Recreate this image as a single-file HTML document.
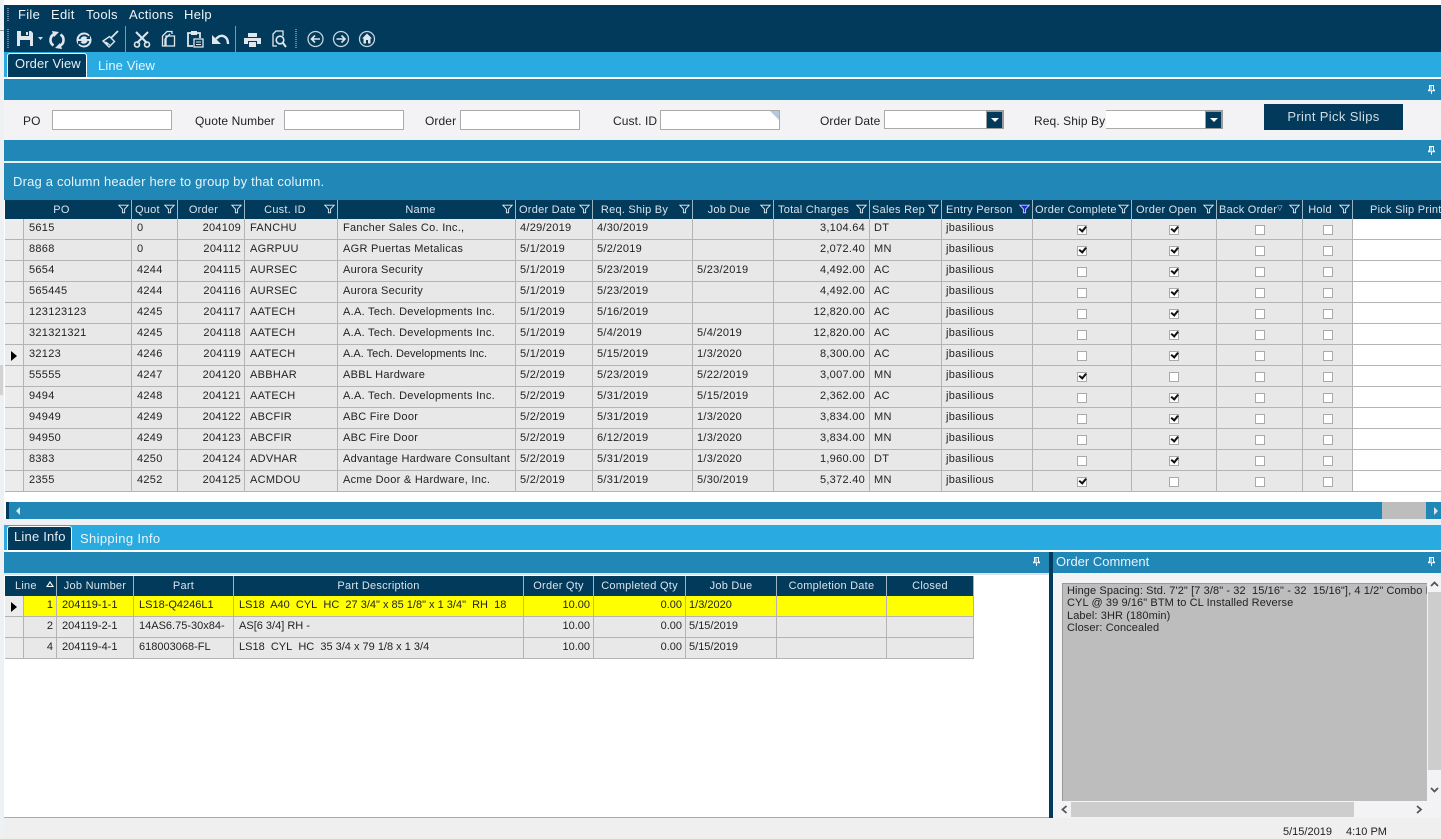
<!DOCTYPE html>
<html><head><meta charset="utf-8"><title>Orders</title>
<style>
html,body{margin:0;padding:0;width:1441px;height:839px;overflow:hidden;background:#fff;font-family:"Liberation Sans",sans-serif;color:#222}
.a{position:absolute}
.t{position:absolute;white-space:nowrap;font-size:12px;letter-spacing:.1px;line-height:14px}
.band{position:absolute;background:#2187b7}
.inp{position:absolute;height:18px;background:#fff;border:1px solid #aaa;top:110px;box-sizing:content-box}
table{border-collapse:separate;border-spacing:0;table-layout:fixed;position:absolute}
th{background:#023a5c;color:#d8e4ec;font-weight:normal;font-size:11px;letter-spacing:.25px;height:18px;padding:0;border-right:1px solid #9fb4c2;text-align:center;position:relative;white-space:nowrap;overflow:hidden;line-height:18px}
td{background:#e8e8e8;height:20px;padding:0 0 0 5px;border-right:1px solid #b4b4b4;border-bottom:1px solid #b4b4b4;font-size:11px;letter-spacing:.28px;line-height:18px;white-space:nowrap;overflow:hidden;vertical-align:top;color:#222;box-sizing:content-box}
td.r{text-align:right;padding:0 3px 0 0}
td.m{text-align:right;padding:0 4px 0 0}
td.d{padding-left:4px}
td.s{background:#ececec;padding:0;position:relative}
td.c{padding:0;text-align:center;position:relative}
td.w{background:#fff;border-right:0}
tr.y td{background:#ff0}
tr.y td.s{background:#ececec}
.lo td{letter-spacing:0}
i.k{position:absolute;left:50%;top:6px;margin-left:-5px;width:8px;height:8px;background:#fff;border:1px solid #aaa;display:block}
i.k.x::after{content:"";position:absolute;left:1px;top:0;width:5px;height:2.5px;border-left:2px solid #111;border-bottom:2px solid #111;transform:rotate(-50deg)}
svg.f{position:absolute;right:2px;top:4px;width:11px;height:10px}
.ar{position:absolute;left:6px;top:6px;width:0;height:0;border-left:6px solid #000;border-top:5px solid transparent;border-bottom:5px solid transparent}
</style></head><body>
<svg width="0" height="0" style="position:absolute"><defs>
<symbol id="fn" viewBox="0 0 12 10"><path d="M.8.8H11.2L7.2 5V9.2H4.8V5Z" fill="none" stroke="#e8f0f5" stroke-width="1"/></symbol>
<symbol id="fb" viewBox="0 0 12 10"><path d="M.8.8H11.2L7.2 5V9.2H4.8V5Z" fill="#2222cc" stroke="#c8d0ff" stroke-width="1"/></symbol>
<symbol id="pin" viewBox="0 0 7 9"><path d="M1.500.5H5.500V5H6.500V5.800H.5V5H1.500ZM3 1V5M3.500 6V9" fill="none" stroke="#fff" stroke-width="1"/></symbol>
</defs></svg>

<!-- left edge -->
<div class="a" style="left:0;top:0;width:4px;height:839px;background:#eef1f4"></div>
<div class="a" style="left:0;top:30px;width:6px;height:1px;background:#9a9a9a"></div>
<div class="a" style="left:0;top:365px;width:3px;height:30px;background:#d2d2d2"></div>

<!-- top navy -->
<div class="a" style="left:4px;top:5px;width:1437px;height:47px;background:#023a5c"></div>
<div class="t" style="left:18px;top:8px;color:#eef3f6;font-size:13px;letter-spacing:.3px">File</div>
<div class="t" style="left:51px;top:8px;color:#eef3f6;font-size:13px;letter-spacing:.3px">Edit</div>
<div class="t" style="left:86px;top:8px;color:#eef3f6;font-size:13px;letter-spacing:.3px">Tools</div>
<div class="t" style="left:129px;top:8px;color:#eef3f6;font-size:13px;letter-spacing:.3px">Actions</div>
<div class="t" style="left:184px;top:8px;color:#eef3f6;font-size:13px;letter-spacing:.3px">Help</div>

<svg class="a" style="left:0;top:0" width="400" height="52" viewBox="0 0 400 52">
 <g stroke="#8fa5b3" stroke-width="1.5" stroke-dasharray="1 1" fill="none">
  <path d="M8 8V22M8 29V48M296 29V48"/></g>
 <path d="M125.500 26V52M235.500 26V52" stroke="#7f97a6"/>
 <!-- save -->
 <path d="M17 31H31L33 33V46H17Z" fill="#dfe7ec"/><path d="M21 31H29V36H21ZM20 40H30V46H20Z" fill="#023a5c"/><path d="M26 32H28V35H26Z" fill="#dfe7ec"/>
 <path d="M38 37H43L40.500 40Z" fill="#d6e0e6"/>
 <!-- refresh -->
 <g fill="none" stroke="#dfe7ec" stroke-width="2.600"><path d="M54.500 34A6.500 6.500 0 0 0 53.500 45.500"/><path d="M59.500 46A6.500 6.500 0 0 0 60.500 34.500"/></g>
 <path d="M52 31L59 32L54 37ZM62 49L55 48L60 43Z" fill="#dfe7ec"/>
 <!-- sync -->
 <circle cx="84" cy="40" r="7.500" fill="#dfe7ec"/><path d="M79.500 39A5 5 0 0 1 88 37M88.500 41A5 5 0 0 1 80 43" fill="none" stroke="#023a5c" stroke-width="1.800"/><path d="M86 39H90V35ZM82 41H78V45Z" fill="#023a5c"/>
 <!-- broom -->
 <path d="M118 31L111 38" stroke="#dfe7ec" stroke-width="1.800"/><path d="M109.500 36.500L114.500 41.500L109 47L103 41Z" fill="none" stroke="#dfe7ec" stroke-width="1.400"/><path d="M106 42L110 45M104.500 41.500L108 45" stroke="#dfe7ec"/>
 <!-- scissors -->
 <path d="M136 32L147 43M148 32L137 43" stroke="#dfe7ec" stroke-width="2"/><circle cx="137" cy="44.500" r="2.500" fill="none" stroke="#dfe7ec" stroke-width="1.600"/><circle cx="147" cy="44.500" r="2.500" fill="none" stroke="#dfe7ec" stroke-width="1.600"/>
 <!-- copy -->
 <path d="M166 46H162.500V36L167 31.500H172V34M166 36H174.500V46H166Z" fill="none" stroke="#dfe7ec" stroke-width="1.300"/><path d="M170 34L165 39V46" fill="none" stroke="#dfe7ec" stroke-width="1.300"/>
 <!-- paste -->
 <path d="M193 46H188V33H192M196 33H200V38" fill="none" stroke="#dfe7ec" stroke-width="1.800"/><path d="M191 31H197V35H191Z" fill="#dfe7ec"/><path d="M194 39H203V47H194Z" fill="none" stroke="#dfe7ec" stroke-width="1.300"/><path d="M196 42H201M196 44.500H201" stroke="#dfe7ec"/>
 <!-- undo -->
 <path d="M216 39C221 33 228 36 228 44" fill="none" stroke="#dfe7ec" stroke-width="2.400"/><path d="M212 35V44H221Z" fill="#dfe7ec"/>
 <!-- print -->
 <path d="M248 33H257V37H248ZM244 38H261V44H257V41H248V44H244ZM249 42H256V47H249Z" fill="#dfe7ec"/>
 <!-- preview -->
 <path d="M277 46H273V34L276 31H283V36" fill="none" stroke="#dfe7ec" stroke-width="1.300"/><circle cx="280" cy="40" r="3.800" fill="none" stroke="#dfe7ec" stroke-width="1.600"/><path d="M283 43L286 47" stroke="#dfe7ec" stroke-width="2"/>
 <!-- back forward home -->
 <circle cx="315.500" cy="39" r="7.500" fill="none" stroke="#c8d4dc" stroke-width="1.300"/><path d="M320 39H312M315 35.500L311.500 39L315 42.500" fill="none" stroke="#dfe7ec" stroke-width="1.600"/>
 <circle cx="341" cy="39" r="7.500" fill="none" stroke="#c8d4dc" stroke-width="1.300"/><path d="M336.500 39H344.500M341.500 35.500L345 39L341.500 42.500" fill="none" stroke="#dfe7ec" stroke-width="1.600"/>
 <circle cx="367" cy="39" r="7.500" fill="none" stroke="#c8d4dc" stroke-width="1.300"/><path d="M367 33.500L372 38.500H370.500V43.500H363.500V38.500H362Z" fill="#dfe7ec"/><path d="M366 40H368V43.500H366Z" fill="#023a5c"/>
</svg>

<!-- upper tab band -->
<div class="a" style="left:4px;top:52px;width:1437px;height:25px;background:#29abe2"></div>
<div class="a" style="left:7px;top:53px;width:78px;height:24px;background:#023a5c;border:1px solid #fff;border-bottom:0;border-radius:3px 3px 0 0"></div>
<div class="t" style="left:15px;top:57px;color:#e6eef3;font-size:13px;letter-spacing:.1px">Order View</div>
<div class="t" style="left:98px;top:59px;color:#e8f6fc;font-size:13px;letter-spacing:.1px">Line View</div>
<div class="a" style="left:4px;top:77px;width:1437px;height:2px;background:#fff"></div>
<div class="band" style="left:4px;top:79px;width:1437px;height:21px"></div>
<svg class="a" style="left:1428px;top:85px" width="7" height="9"><use href="#pin"/></svg>

<!-- form -->
<div class="a" style="left:4px;top:100px;width:1437px;height:40px;background:#f3f3f6"></div>
<div class="t" style="left:23px;top:114px">PO</div>
<div class="inp" style="left:52px;width:118px"></div>
<div class="t" style="left:195px;top:114px">Quote Number</div>
<div class="inp" style="left:284px;width:118px"></div>
<div class="t" style="left:425px;top:114px">Order</div>
<div class="inp" style="left:460px;width:118px"></div>
<div class="t" style="left:613px;top:114px">Cust. ID</div>
<div class="inp" style="left:660px;width:118px"></div>
<div class="a" style="left:770px;top:111px;width:0;height:0;border-top:9px solid #b5c9de;border-left:9px solid transparent"></div>
<div class="t" style="left:820px;top:114px">Order Date</div>
<div class="a" style="left:884px;top:110px;width:120px;height:19px;background:#fff;border:1px solid #aaa;box-sizing:border-box"></div>
<div class="a" style="left:986px;top:110px;width:18px;height:19px;background:#9c9c9c"></div>
<div class="a" style="left:987px;top:112px;width:15px;height:16px;background:#023a5c"></div>
<div class="a" style="left:991px;top:118px;width:0;height:0;border-top:4px solid #fff;border-left:4px solid transparent;border-right:4px solid transparent"></div>
<div class="t" style="left:1034px;top:114px">Req. Ship By</div>
<div class="a" style="left:1106px;top:110px;width:117px;height:19px;background:#fff;border-top:1px solid #aaa;border-bottom:1px solid #aaa;box-sizing:border-box"></div>
<div class="a" style="left:1205px;top:110px;width:18px;height:19px;background:#9c9c9c"></div>
<div class="a" style="left:1206px;top:112px;width:15px;height:16px;background:#023a5c"></div>
<div class="a" style="left:1210px;top:118px;width:0;height:0;border-top:4px solid #fff;border-left:4px solid transparent;border-right:4px solid transparent"></div>
<div class="a" style="left:1264px;top:104px;width:139px;height:26px;background:#023a5c;color:#d0dde5;font-size:13px;letter-spacing:.35px;line-height:26px;text-align:center">Print Pick Slips</div>

<div class="band" style="left:4px;top:140px;width:1437px;height:21px"></div>
<svg class="a" style="left:1428px;top:146px" width="7" height="9"><use href="#pin"/></svg>
<div class="a" style="left:4px;top:161px;width:1437px;height:2px;background:#e6f0f5"></div>
<div class="band" style="left:4px;top:163px;width:1437px;height:37px"></div>
<div class="t" style="left:13px;top:175px;color:#e6f3f9;font-size:13px;letter-spacing:.2px">Drag a column header here to group by that column.</div>

<!-- main grid -->
<div class="a" style="left:5px;top:200px;width:1436px;height:292px;overflow:hidden">
<table style="left:0;top:0;width:1487px">
<colgroup><col style="width:19px"><col style="width:108px"><col style="width:46px"><col style="width:67px"><col style="width:93px"><col style="width:178px"><col style="width:77px"><col style="width:100px"><col style="width:81px"><col style="width:96px"><col style="width:72px"><col style="width:91px"><col style="width:99px"><col style="width:85px"><col style="width:86px"><col style="width:50px"><col style="width:139px"></colgroup>
<tr>
<th style="border-right:0"></th>
<th style="padding-right:32px">PO<svg class="f"><use href="#fn"/></svg></th>
<th style="text-align:left;padding-left:3px">Quot<svg class="f"><use href="#fn"/></svg></th>
<th style="padding-right:15px">Order<svg class="f"><use href="#fn"/></svg></th>
<th style="padding-right:12px">Cust. ID<svg class="f"><use href="#fn"/></svg></th>
<th style="padding-right:12px">Name<svg class="f"><use href="#fn"/></svg></th>
<th style="text-align:left;padding-left:3px">Order Date<svg class="f"><use href="#fn"/></svg></th>
<th style="padding-right:16px">Req. Ship By<svg class="f"><use href="#fn"/></svg></th>
<th style="padding-right:8px">Job Due<svg class="f"><use href="#fn"/></svg></th>
<th style="text-align:left;padding-left:4px">Total Charges<svg class="f"><use href="#fn"/></svg></th>
<th style="text-align:left;padding-left:2px">Sales Rep<svg class="f"><use href="#fn"/></svg></th>
<th style="text-align:left;padding-left:4px">Entry Person<svg class="f"><use href="#fb"/></svg></th>
<th style="text-align:left;padding-left:2px">Order Complete<svg class="f"><use href="#fn"/></svg></th>
<th style="text-align:left;padding-left:4px">Order Open<svg class="f"><use href="#fn"/></svg></th>
<th style="text-align:left;padding-left:2px">Back Order<span style="font-size:7px;vertical-align:3px">▽</span><svg class="f"><use href="#fn"/></svg></th>
<th style="padding-right:15px">Hold<svg class="f"><use href="#fn"/></svg></th>
<th style="border-right:0;text-align:left;padding-left:17px">Pick Slip Printed</th>
</tr>
<tr><td class="s"></td><td>5615</td><td>0</td><td class="r">204109</td><td>FANCHU</td><td>Fancher Sales Co. Inc.,</td><td class="d">4/29/2019</td><td class="d">4/30/2019</td><td class="d"></td><td class="m">3,104.64</td><td class="d">DT</td><td class="d">jbasilious</td><td class="c"><i class="k x"></i></td><td class="c"><i class="k x"></i></td><td class="c"><i class="k"></i></td><td class="c"><i class="k"></i></td><td class="w"></td></tr>
<tr><td class="s"></td><td>8868</td><td>0</td><td class="r">204112</td><td>AGRPUU</td><td>AGR Puertas Metalicas</td><td class="d">5/1/2019</td><td class="d">5/2/2019</td><td class="d"></td><td class="m">2,072.40</td><td class="d">MN</td><td class="d">jbasilious</td><td class="c"><i class="k x"></i></td><td class="c"><i class="k x"></i></td><td class="c"><i class="k"></i></td><td class="c"><i class="k"></i></td><td class="w"></td></tr>
<tr><td class="s"></td><td>5654</td><td>4244</td><td class="r">204115</td><td>AURSEC</td><td>Aurora Security</td><td class="d">5/1/2019</td><td class="d">5/23/2019</td><td class="d">5/23/2019</td><td class="m">4,492.00</td><td class="d">AC</td><td class="d">jbasilious</td><td class="c"><i class="k"></i></td><td class="c"><i class="k x"></i></td><td class="c"><i class="k"></i></td><td class="c"><i class="k"></i></td><td class="w"></td></tr>
<tr><td class="s"></td><td>565445</td><td>4244</td><td class="r">204116</td><td>AURSEC</td><td>Aurora Security</td><td class="d">5/1/2019</td><td class="d">5/23/2019</td><td class="d"></td><td class="m">4,492.00</td><td class="d">AC</td><td class="d">jbasilious</td><td class="c"><i class="k"></i></td><td class="c"><i class="k x"></i></td><td class="c"><i class="k"></i></td><td class="c"><i class="k"></i></td><td class="w"></td></tr>
<tr><td class="s"></td><td>123123123</td><td>4245</td><td class="r">204117</td><td>AATECH</td><td>A.A. Tech. Developments Inc.</td><td class="d">5/1/2019</td><td class="d">5/16/2019</td><td class="d"></td><td class="m">12,820.00</td><td class="d">AC</td><td class="d">jbasilious</td><td class="c"><i class="k"></i></td><td class="c"><i class="k x"></i></td><td class="c"><i class="k"></i></td><td class="c"><i class="k"></i></td><td class="w"></td></tr>
<tr><td class="s"></td><td>321321321</td><td>4245</td><td class="r">204118</td><td>AATECH</td><td>A.A. Tech. Developments Inc.</td><td class="d">5/1/2019</td><td class="d">5/4/2019</td><td class="d">5/4/2019</td><td class="m">12,820.00</td><td class="d">AC</td><td class="d">jbasilious</td><td class="c"><i class="k"></i></td><td class="c"><i class="k x"></i></td><td class="c"><i class="k"></i></td><td class="c"><i class="k"></i></td><td class="w"></td></tr>
<tr><td class="s"><div class="ar"></div></td><td>32123</td><td>4246</td><td class="r">204119</td><td>AATECH</td><td style="letter-spacing:0">A.A. Tech. Developments Inc.</td><td class="d">5/1/2019</td><td class="d">5/15/2019</td><td class="d">1/3/2020</td><td class="m">8,300.00</td><td class="d">AC</td><td class="d">jbasilious</td><td class="c"><i class="k"></i></td><td class="c"><i class="k x"></i></td><td class="c"><i class="k"></i></td><td class="c"><i class="k"></i></td><td class="w"></td></tr>
<tr><td class="s"></td><td>55555</td><td>4247</td><td class="r">204120</td><td>ABBHAR</td><td>ABBL Hardware</td><td class="d">5/2/2019</td><td class="d">5/23/2019</td><td class="d">5/22/2019</td><td class="m">3,007.00</td><td class="d">MN</td><td class="d">jbasilious</td><td class="c"><i class="k x"></i></td><td class="c"><i class="k"></i></td><td class="c"><i class="k"></i></td><td class="c"><i class="k"></i></td><td class="w"></td></tr>
<tr><td class="s"></td><td>9494</td><td>4248</td><td class="r">204121</td><td>AATECH</td><td>A.A. Tech. Developments Inc.</td><td class="d">5/2/2019</td><td class="d">5/31/2019</td><td class="d">5/15/2019</td><td class="m">2,362.00</td><td class="d">AC</td><td class="d">jbasilious</td><td class="c"><i class="k"></i></td><td class="c"><i class="k x"></i></td><td class="c"><i class="k"></i></td><td class="c"><i class="k"></i></td><td class="w"></td></tr>
<tr><td class="s"></td><td>94949</td><td>4249</td><td class="r">204122</td><td>ABCFIR</td><td>ABC Fire Door</td><td class="d">5/2/2019</td><td class="d">5/31/2019</td><td class="d">1/3/2020</td><td class="m">3,834.00</td><td class="d">MN</td><td class="d">jbasilious</td><td class="c"><i class="k"></i></td><td class="c"><i class="k x"></i></td><td class="c"><i class="k"></i></td><td class="c"><i class="k"></i></td><td class="w"></td></tr>
<tr><td class="s"></td><td>94950</td><td>4249</td><td class="r">204123</td><td>ABCFIR</td><td>ABC Fire Door</td><td class="d">5/2/2019</td><td class="d">6/12/2019</td><td class="d">1/3/2020</td><td class="m">3,834.00</td><td class="d">MN</td><td class="d">jbasilious</td><td class="c"><i class="k"></i></td><td class="c"><i class="k x"></i></td><td class="c"><i class="k"></i></td><td class="c"><i class="k"></i></td><td class="w"></td></tr>
<tr><td class="s"></td><td>8383</td><td>4250</td><td class="r">204124</td><td>ADVHAR</td><td>Advantage Hardware Consultant</td><td class="d">5/2/2019</td><td class="d">5/31/2019</td><td class="d">1/3/2020</td><td class="m">1,960.00</td><td class="d">DT</td><td class="d">jbasilious</td><td class="c"><i class="k"></i></td><td class="c"><i class="k x"></i></td><td class="c"><i class="k"></i></td><td class="c"><i class="k"></i></td><td class="w"></td></tr>
<tr><td class="s"></td><td>2355</td><td>4252</td><td class="r">204125</td><td>ACMDOU</td><td>Acme Door &amp; Hardware, Inc.</td><td class="d">5/2/2019</td><td class="d">5/31/2019</td><td class="d">5/30/2019</td><td class="m">5,372.40</td><td class="d">MN</td><td class="d">jbasilious</td><td class="c"><i class="k x"></i></td><td class="c"><i class="k"></i></td><td class="c"><i class="k"></i></td><td class="c"><i class="k"></i></td><td class="w"></td></tr>
</table>
</div>

<!-- h scroll -->
<div class="band" style="left:6px;top:502px;width:1435px;height:17px"></div>
<div class="a" style="left:6px;top:502px;width:3px;height:17px;background:#023a5c"></div>
<div class="a" style="left:16px;top:507px;width:0;height:0;border-right:4px solid #d8e8f0;border-top:4px solid transparent;border-bottom:4px solid transparent"></div>
<div class="a" style="left:1382px;top:502px;width:44px;height:17px;background:#bdbdbd"></div>
<div class="a" style="left:1434px;top:507px;width:0;height:0;border-left:4px solid #d8e8f0;border-top:4px solid transparent;border-bottom:4px solid transparent"></div>
<div class="a" style="left:4px;top:519px;width:1437px;height:6px;background:#eef1f4"></div>

<!-- lower tabs -->
<div class="a" style="left:4px;top:525px;width:1437px;height:25px;background:#29abe2"></div>
<div class="a" style="left:7px;top:526px;width:63px;height:24px;background:#023a5c;border:1px solid #fff;border-bottom:0;border-radius:3px 3px 0 0"></div>
<div class="t" style="left:14px;top:530px;color:#e6eef3;font-size:13px;letter-spacing:.2px">Line Info</div>
<div class="t" style="left:80px;top:532px;color:#e8f6fc;font-size:13px;letter-spacing:.35px">Shipping Info</div>
<div class="a" style="left:4px;top:550px;width:1437px;height:2px;background:#fff"></div>

<div class="band" style="left:4px;top:552px;width:1045px;height:21px"></div>
<svg class="a" style="left:1033px;top:557px" width="7" height="9"><use href="#pin"/></svg>

<!-- lower left white -->
<div class="a" style="left:4px;top:573px;width:1045px;height:245px;background:#fff;border-bottom:1px solid #aaa;box-sizing:border-box"></div>
<div class="a" style="left:4px;top:573px;width:1045px;height:2px;background:#dfe3e6"></div>
<table class="lo" style="left:5px;top:576px;width:969px">
<colgroup><col style="width:19px"><col style="width:33px"><col style="width:77px"><col style="width:100px"><col style="width:290px"><col style="width:70px"><col style="width:92px"><col style="width:91px"><col style="width:110px"><col style="width:87px"></colgroup>
<tr>
<th colspan="2" style="height:20px;text-align:left;padding-left:10px">Line</th>
<th style="height:20px">Job Number</th>
<th style="height:20px">Part</th>
<th style="height:20px">Part Description</th>
<th style="height:20px">Order Qty</th>
<th style="height:20px">Completed Qty</th>
<th style="height:20px">Job Due</th>
<th style="height:20px">Completion Date</th>
<th style="height:20px">Closed</th>
</tr>
<tr class="y"><td class="s"><div class="ar"></div></td><td class="r">1</td><td>204119-1-1</td><td>LS18-Q4246L1</td><td>LS18&nbsp; A40&nbsp; CYL&nbsp; HC&nbsp; 27 3/4" x 85 1/8" x 1 3/4"&nbsp; RH&nbsp; 18</td><td class="r">10.00</td><td class="r">0.00</td><td style="padding-left:3px">1/3/2020</td><td></td><td></td></tr>
<tr><td class="s"></td><td class="r">2</td><td>204119-2-1</td><td>14AS6.75-30x84-</td><td>AS[6 3/4] RH -</td><td class="r">10.00</td><td class="r">0.00</td><td style="padding-left:3px">5/15/2019</td><td></td><td></td></tr>
<tr><td class="s"></td><td class="r">4</td><td>204119-4-1</td><td>618003068-FL</td><td>LS18&nbsp; CYL&nbsp; HC&nbsp; 35 3/4 x 79 1/8 x 1 3/4</td><td class="r">10.00</td><td class="r">0.00</td><td style="padding-left:3px">5/15/2019</td><td></td><td></td></tr>
</table>
<div class="a" style="left:46px;top:581px;width:0;height:0;border-bottom:6px solid #fff;border-left:4px solid transparent;border-right:4px solid transparent"></div>
<div class="a" style="left:48px;top:583px;width:0;height:0;border-bottom:3px solid #023a5c;border-left:2px solid transparent;border-right:2px solid transparent"></div>

<!-- splitter -->
<div class="a" style="left:1049px;top:552px;width:4px;height:266px;background:#023a5c"></div>

<!-- right panel -->
<div class="band" style="left:1053px;top:552px;width:388px;height:21px"></div>
<div class="t" style="left:1056px;top:555px;color:#e6f3f9;font-size:13px;letter-spacing:0">Order Comment</div>
<svg class="a" style="left:1428px;top:557px" width="7" height="9"><use href="#pin"/></svg>
<div class="a" style="left:1053px;top:573px;width:388px;height:245px;background:#f3f3f6"></div>
<div class="a" style="left:1062px;top:583px;width:365px;height:218px;background:#bdbdbd;border-left:1px solid #999;border-top:1px solid #999;box-sizing:border-box;overflow:hidden">
<div style="position:absolute;left:4px;top:.5px;font-size:11px;letter-spacing:.1px;line-height:12.600px;white-space:nowrap;color:#222">Hinge Spacing: Std. 7'2" [7 3/8" - 32&nbsp; 15/16" - 32&nbsp; 15/16"], 4 1/2" Combo Hinge<br>CYL @ 39 9/16" BTM to CL Installed Reverse<br>Label: 3HR (180min)<br>Closer: Concealed</div>
</div>
<div class="a" style="left:1428px;top:592px;width:13px;height:178px;background:#cdcdcd"></div>
<svg class="a" style="left:1428px;top:578px" width="13" height="12"><path d="M3 8L6.500 4.500L10 8" fill="none" stroke="#555" stroke-width="1.800"/></svg>
<svg class="a" style="left:1428px;top:784px" width="13" height="12"><path d="M3 4L6.500 7.500L10 4" fill="none" stroke="#555" stroke-width="1.800"/></svg>
<div class="a" style="left:1071px;top:802px;width:283px;height:15px;background:#cdcdcd"></div>
<svg class="a" style="left:1059px;top:803px" width="12" height="13"><path d="M7.500 3L3.500 6.500L7.500 10" fill="none" stroke="#555" stroke-width="1.800"/></svg>
<svg class="a" style="left:1413px;top:803px" width="12" height="13"><path d="M4 3L8 6.500L4 10" fill="none" stroke="#555" stroke-width="1.800"/></svg>

<!-- status bar -->
<div class="a" style="left:4px;top:818px;width:1437px;height:21px;background:#efefef"></div>
<div class="t" style="left:1283px;top:825px;font-size:11px;letter-spacing:0">5/15/2019</div>
<div class="t" style="left:1346px;top:825px;font-size:11px;letter-spacing:0">4:10 PM</div>
</body></html>
